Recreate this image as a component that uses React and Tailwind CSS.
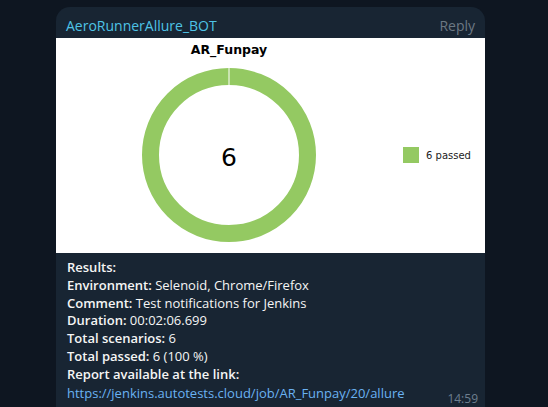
const lines = [
  { label: "Results:", value: "" },
  { label: "Environment:", value: " Selenoid, Chrome/Firefox" },
  { label: "Comment:", value: " Test notifications for Jenkins" },
  { label: "Duration:", value: " 00:02:06.699" },
  { label: "Total scenarios:", value: " 6" },
  { label: "Total passed:", value: " 6 (100 %)" },
  { label: "Report available at the link:", value: "" },
];

function Chart() {
  return (
    <svg width="429" height="215" viewBox="0 0 429 215" className="block">
      <text
        x="173"
        y="16"
        textAnchor="middle"
        fontFamily="DejaVu Sans, sans-serif"
        fontWeight="bold"
        fontSize="12.5"
        fill="#000"
      >
        AR_Funpay
      </text>
      <circle cx="173" cy="117" r="78.5" fill="none" stroke="#94c962" strokeWidth="17" />
      <line x1="173" y1="29" x2="173" y2="48" stroke="#fff" strokeWidth="1" />
      <text
        x="173"
        y="128"
        textAnchor="middle"
        fontFamily="DejaVu Sans, sans-serif"
        fontSize="25"
        fill="#000"
      >
        6
      </text>
      <rect x="347" y="109" width="16" height="16" fill="#94c962" />
      <text x="370" y="121" fontFamily="DejaVu Sans, sans-serif" fontSize="10" fill="#222">
        6 passed
      </text>
    </svg>
  );
}

export default function App() {
  return (
    <div className="h-[407px] w-[548px] overflow-hidden bg-[#0e1621] pt-[7px] pl-[56px] font-['Open_Sans',sans-serif]">
      <div className="w-[429px] h-[420px] rounded-t-[14px] rounded-br-[14px] bg-[#182533]">
        <div className="flex h-[31px] items-center justify-between pl-[10px] pr-[10px] pt-[5px]">
          <span className="text-[14px] font-medium text-[#4ec3e6]">AeroRunnerAllure_BOT</span>
          <span className="text-[14px] text-[#6c7883]">Reply</span>
        </div>
        <div className="bg-white">
          <Chart />
        </div>
        <div className="relative px-[11px] pt-[6px] text-[13px] leading-[17.8px] text-[#f5f5f5]">
          {lines.map((l) => (
            <div key={l.label}>
              <span className="font-semibold">{l.label}</span>
              {l.value}
            </div>
          ))}
          <div className="flex items-end justify-between pt-[1px]">
            <span className="text-[#6ab2f2]">https://jenkins.autotests.cloud/job/AR_Funpay/20/allure</span>
            <span className="relative top-[5px] -mr-[4px] text-[12px] text-[#6d7f8f]">14:59</span>
          </div>
        </div>
      </div>
    </div>
  );
}
